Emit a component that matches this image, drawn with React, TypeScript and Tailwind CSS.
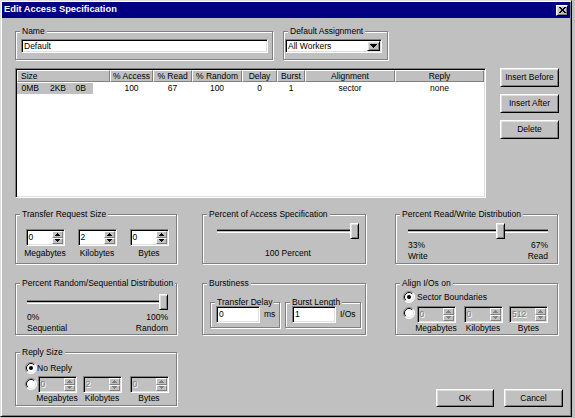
import type { ReactNode } from 'react'

const raised =
  'border border-t-white border-l-white border-r-black border-b-black shadow-[inset_1px_1px_0_#dfdfdf,inset_-1px_-1px_0_#808080]'
const sunken =
  'border border-t-[#808080] border-l-[#808080] border-r-white border-b-white shadow-[inset_1px_1px_0_#000,inset_-1px_-1px_0_#dfdfdf]'
const thin = 'border border-t-white border-l-white border-r-[#808080] border-b-[#808080]'

function Group({ label, className = '', children }: { label: string; className?: string; children?: ReactNode }) {
  return (
    <fieldset
      className={`m-0 min-w-0 border border-[#808080] p-0 shadow-[1px_1px_0_#fff,inset_1px_1px_0_#fff] ${className}`}
    >
      <legend className="ml-[4px] bg-[#c0c0c0] px-[2px] leading-[11px]">{label}</legend>
      {children}
    </fieldset>
  )
}

function Arrow({ dir, color = '#000' }: { dir: 'up' | 'down'; color?: string }) {
  return (
    <svg width="5" height="3" viewBox="0 0 5 3" shapeRendering="crispEdges" fill={color}>
      <path d={dir === 'up' ? 'M2 0h1v1H2zM1 1h3v1H1zM0 2h5v1H0z' : 'M0 0h5v1H0zM1 1h3v1H1zM2 2h1v1H2z'} />
    </svg>
  )
}

function Radio({ checked = false, className = '' }: { checked?: boolean; className?: string }) {
  return (
    <svg width="12" height="12" viewBox="0 0 12 12" className={`shrink-0 ${className}`}>
      <circle cx="6" cy="6" r="5.5" fill="#fff" />
      <path d="M2.1 9.9 A5.5 5.5 0 0 1 9.9 2.1" stroke="#808080" fill="none" />
      <path d="M9.9 2.1 A5.5 5.5 0 0 1 2.1 9.9" stroke="#fff" fill="none" />
      <path d="M2.8 9.2 A4.5 4.5 0 0 1 9.2 2.8" stroke="#000" fill="none" />
      <path d="M9.2 2.8 A4.5 4.5 0 0 1 2.8 9.2" stroke="#dfdfdf" fill="none" />
      {checked && <circle cx="6" cy="6" r="2" fill="#000" />}
    </svg>
  )
}

function SpinBox({ value, disabled = false }: { value: string; disabled?: boolean }) {
  const arrow = disabled ? '#808080' : '#000'
  return (
    <div className={`flex h-[17px] w-[39px] p-[1px] ${sunken} ${disabled ? 'bg-[#c0c0c0]' : 'bg-white'}`}>
      <span
        className={`flex-1 pl-[1px] leading-[13px] ${disabled ? 'text-[#808080] [text-shadow:1px_1px_0_#fff]' : ''}`}
      >
        {value}
      </span>
      <div className="flex w-[11px] flex-col">
        <div className={`flex flex-1 items-center justify-center bg-[#c0c0c0] ${thin}`}>
          <Arrow dir="up" color={arrow} />
        </div>
        <div className={`flex flex-1 items-center justify-center bg-[#c0c0c0] ${thin}`}>
          <Arrow dir="down" color={arrow} />
        </div>
      </div>
    </div>
  )
}

function SpinCol({
  label,
  value,
  disabled,
  className = '',
  labelClass = '',
}: {
  label: string
  value: string
  disabled?: boolean
  className?: string
  labelClass?: string
}) {
  return (
    <div className={`flex flex-col items-center ${className}`}>
      <SpinBox value={value} disabled={disabled} />
      <span className={`leading-[11px] ${labelClass}`}>{label}</span>
    </div>
  )
}

function Slider({ value, width, className = '' }: { value: number; width: number; className?: string }) {
  const left = Math.round((value / 100) * (width - 9))
  return (
    <div className={`relative h-[16px] pt-[6px] ${className}`}>
      <div className="h-[4px] border-t border-b border-t-[#808080] border-b-white shadow-[inset_0_1px_0_#000]" />
      <div className={`absolute top-0 h-[16px] w-[9px] bg-[#c0c0c0] ${raised}`} style={{ left }} />
    </div>
  )
}

function Button({ children, className = '' }: { children: ReactNode; className?: string }) {
  return (
    <div className={`flex items-center justify-center bg-[#c0c0c0] leading-none ${raised} ${className}`}>
      {children}
    </div>
  )
}

const columns = [
  { label: 'Size', w: 'w-[93px]', value: '' },
  { label: '% Access', w: 'w-[43px]', value: '100' },
  { label: '% Read', w: 'w-[39px]', value: '67' },
  { label: '% Random', w: 'w-[50px]', value: '100' },
  { label: 'Delay', w: 'w-[35px]', value: '0' },
  { label: 'Burst', w: 'w-[28px]', value: '1' },
  { label: 'Alignment', w: 'w-[90px]', value: 'sector' },
  { label: 'Reply', w: 'flex-1', value: 'none' },
]

function SpecList() {
  return (
    <div className={`flex h-[130px] w-[471px] flex-col bg-white p-[1px] ${sunken}`}>
      <div className="flex h-[12px]">
        {columns.map((c, i) => (
          <div
            key={c.label}
            className={`${c.w} bg-[#c0c0c0] leading-[10px] ${thin} ${i === 0 ? 'pl-[3px] text-left' : 'text-center'}`}
          >
            {c.label}
          </div>
        ))}
      </div>
      <div className="mt-[1px] flex h-[11px] leading-[11px]">
        {columns.map((c, i) =>
          i === 0 ? (
            <div key={c.label} className={c.w}>
              <div className="flex w-[76px] bg-[#c0c0c0]">
                <span className="w-[22px] text-right">0MB</span>
                <span className="w-[27px] text-right">2KB</span>
                <span className="w-[20px] text-right">0B</span>
              </div>
            </div>
          ) : (
            <div key={c.label} className={`${c.w} text-center`}>
              {c.value}
            </div>
          ),
        )}
      </div>
    </div>
  )
}

export default function App() {
  return (
    <div className="h-[418px] w-[575px] bg-[#c0c0c0] font-['Liberation_Sans',Arial,sans-serif] text-[8.5px] text-black">
      <div className="flex h-[417px] w-[572px] flex-col border border-t-[#dfdfdf] border-l-[#dfdfdf] border-r-black border-b-black p-[1px] shadow-[inset_1px_1px_0_#fff,inset_-1px_-1px_0_#808080]">
        <div className="flex h-[16px] items-center justify-between bg-[#000080] px-[2px]">
          <span className="text-[9.3px] font-bold leading-none text-white">Edit Access Specification</span>
          <div className={`flex h-[11px] w-[12px] items-center justify-center bg-[#c0c0c0] ${raised}`}>
            <svg width="7" height="6" viewBox="0 0 7 6" shapeRendering="crispEdges" fill="#000">
              <path d="M0 0h2v1H0zM5 0h2v1H5zM1 1h2v1H1zM4 1h2v1H4zM2 2h3v2H2zM1 4h2v1H1zM4 4h2v1H4zM0 5h2v1H0zM5 5h2v1H5z" />
            </svg>
          </div>
        </div>

        <div className="flex flex-col pl-[13px] pr-[7px] pt-[8px]">
          <div className="flex gap-[10px]">
            <Group label="Name" className="h-[34px] w-[258px]">
              <div className={`ml-[5px] mt-[2px] h-[14px] w-[247px] bg-white p-[1px] pl-[2px] leading-[10px] ${sunken}`}>
                Default
              </div>
            </Group>
            <Group label="Default Assignment" className="h-[34px] w-[105px]">
              <div className={`ml-[1px] mt-[2px] flex h-[14px] w-[97px] bg-white p-[1px] ${sunken}`}>
                <span className="flex-1 pl-[1px] leading-[10px]">All Workers</span>
                <div className={`flex w-[13px] items-center justify-center bg-[#c0c0c0] ${raised}`}>
                  <svg width="7" height="4" viewBox="0 0 7 4" shapeRendering="crispEdges" fill="#000">
                    <path d="M0 0h7v1H0zM1 1h5v1H1zM2 2h3v1H2zM3 3h1v1H3z" />
                  </svg>
                </div>
              </div>
            </Group>
          </div>

          <div className="mt-[8px] flex">
            <SpecList />
            <div className="ml-[14px] flex flex-col gap-[7px]">
              <Button className="h-[19px] w-[59px]">Insert Before</Button>
              <Button className="h-[19px] w-[59px]">Insert After</Button>
              <Button className="h-[19px] w-[59px]">Delete</Button>
            </div>
          </div>

          <div className="mt-[11px] flex">
            <Group label="Transfer Request Size" className="h-[55px] w-[162px]">
              <div className="ml-[3px] mt-[9px] flex">
                <SpinCol label="Megabytes" value="0" className="w-[52px]" labelClass="mt-[2px]" />
                <SpinCol label="Kilobytes" value="2" className="w-[52px]" labelClass="mt-[2px]" />
                <SpinCol label="Bytes" value="0" className="w-[52px]" labelClass="mt-[2px]" />
              </div>
            </Group>
            <Group label="Percent of Access Specification" className="ml-[25px] h-[55px] w-[164px]">
              <Slider value={100} width={142} className="ml-[14px] mt-[3px] w-[142px]" />
              <div className="ml-[14px] mt-[9px] w-[142px] text-center leading-[11px]">100 Percent</div>
            </Group>
            <Group label="Percent Read/Write Distribution" className="ml-[29px] h-[55px] w-[163px]">
              <Slider value={67} width={140} className="ml-[12px] mt-[3px] w-[140px]" />
              <div className="ml-[12px] mt-[1px] flex w-[140px] justify-between leading-[11px]">
                <div>
                  <div>33%</div>
                  <div>Write</div>
                </div>
                <div className="text-right">
                  <div>67%</div>
                  <div>Read</div>
                </div>
              </div>
            </Group>
          </div>

          <div className="mt-[14px] flex">
            <Group label="Percent Random/Sequential Distribution" className="h-[57px] w-[162px]">
              <Slider value={100} width={141} className="ml-[11px] mt-[5px] w-[141px]" />
              <div className="ml-[11px] mt-[2px] flex w-[141px] justify-between leading-[11px]">
                <div>
                  <div>0%</div>
                  <div>Sequential</div>
                </div>
                <div className="text-right">
                  <div>100%</div>
                  <div>Random</div>
                </div>
              </div>
            </Group>
            <Group label="Burstiness" className="ml-[25px] h-[57px] w-[164px]">
              <div className="ml-[7px] mt-[8px] flex gap-[5px]">
                <Group label="Transfer Delay" className="h-[31px] w-[70px]">
                  <div className="-mt-[2px] flex items-center">
                    <div className={`ml-[5px] h-[17px] w-[44px] bg-white p-[1px] pl-[2px] leading-[13px] ${sunken}`}>0</div>
                    <span className="ml-[4px]">ms</span>
                  </div>
                </Group>
                <Group label="Burst Length" className="h-[31px] w-[76px]">
                  <div className="-mt-[2px] flex items-center">
                    <div className={`ml-[6px] h-[17px] w-[44px] bg-white p-[1px] pl-[2px] leading-[13px] ${sunken}`}>1</div>
                    <span className="ml-[4px]">I/Os</span>
                  </div>
                </Group>
              </div>
            </Group>
            <Group label="Align I/Os on" className="ml-[29px] h-[57px] w-[163px]">
              <div className="ml-[7px] mt-[2px] flex h-[12px] items-center gap-[2px]">
                <Radio checked />
                <span className="leading-[11px]">Sector Boundaries</span>
              </div>
              <div className="ml-[7px] mt-[3px] flex items-start">
                <Radio className="mt-[1px]" />
                <SpinCol label="Megabytes" value="0" disabled className="w-[42px]" />
                <SpinCol label="Kilobytes" value="0" disabled className="w-[52px]" />
                <SpinCol label="Bytes" value="512" disabled className="w-[39px]" />
              </div>
            </Group>
          </div>

          <div className="mt-[12px] flex">
            <Group label="Reply Size" className="h-[59px] w-[162px]">
              <div className="ml-[9px] mt-[4px] flex h-[12px] items-center">
                <Radio checked />
                <span className="leading-[11px]">No Reply</span>
              </div>
              <div className="ml-[9px] mt-[2px] flex items-start">
                <Radio className="mt-[2px]" />
                <SpinCol label="Megabytes" value="0" disabled className="w-[40px]" />
                <SpinCol label="Kilobytes" value="2" disabled className="w-[50px]" />
                <SpinCol label="Bytes" value="0" disabled className="w-[44px]" />
              </div>
            </Group>
            <div className="-mb-[1px] ml-auto flex gap-[10px] self-end">
              <Button className="h-[18px] w-[58px]">OK</Button>
              <Button className="h-[18px] w-[59px]">Cancel</Button>
            </div>
          </div>
        </div>
      </div>
    </div>
  )
}
